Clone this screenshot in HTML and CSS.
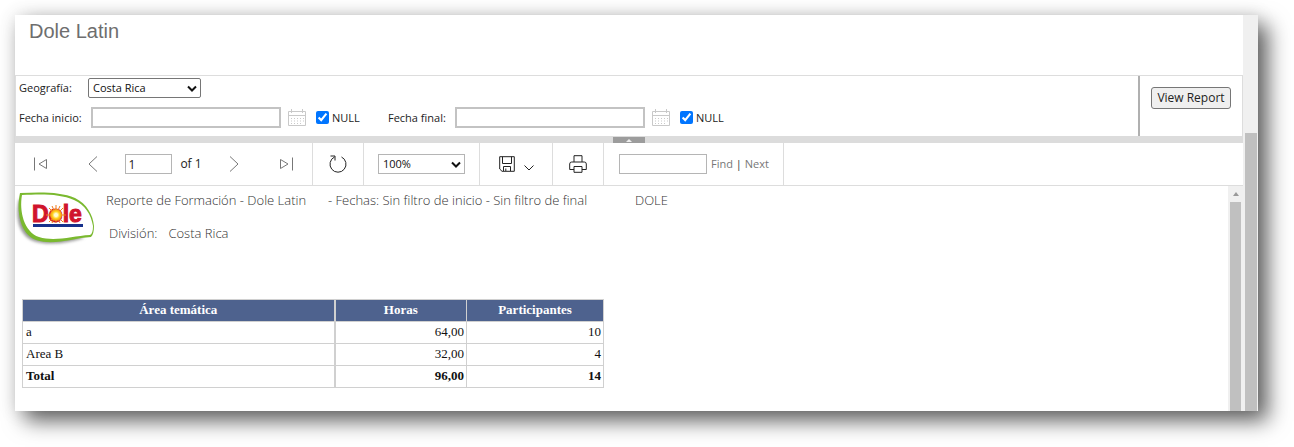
FILE: index.html
```html
<!DOCTYPE html>
<html lang="es">
<head>
<meta charset="utf-8">
<title>Dole Latin</title>
<link rel="stylesheet" href="styles.css">
</head>
<body>
<div class="window">
  <main class="page">
    <header class="page-header"><h1 class="page-title">Dole Latin</h1></header>

    <form class="params">
      <div class="param-fields">
        <div class="param-row">
          <label class="label-first" for="geo">Geografía:</label>
          <div class="select-wrap geo">
            <select id="geo"><option>Costa Rica</option></select>
            <svg class="chevron" viewBox="0 0 10 7"><path d="M1 1.500 5 5.500l4-4"/></svg>
          </div>
        </div>
        <div class="param-row">
          <div class="param-group">
            <label class="label-start" for="start">Fecha inicio:</label>
            <input class="date" id="start" type="text">
            <svg class="calendar" viewBox="0 0 18 17"><path d="M.5 2.500h17v14H.5zM.5 6.500h17M3.500 0v4M14.500 0v4"/><path class="dots" d="M3 9.500h13M3 12h13M3 14.500h11"/></svg>
            <input class="check" id="null1" type="checkbox" checked>
            <label class="null" for="null1">NULL</label>
          </div>
          <div class="param-group">
            <label class="label-end" for="end">Fecha final:</label>
            <input class="date" id="end" type="text">
            <svg class="calendar" viewBox="0 0 18 17"><path d="M.5 2.500h17v14H.5zM.5 6.500h17M3.500 0v4M14.500 0v4"/><path class="dots" d="M3 9.500h13M3 12h13M3 14.500h11"/></svg>
            <input class="check" id="null2" type="checkbox" checked>
            <label class="null" for="null2">NULL</label>
          </div>
        </div>
      </div>
      <div class="param-submit"><button class="view-report" type="button">View Report</button></div>
    </form>

    <div class="splitter"><button class="collapse" type="button" aria-label="Collapse"><svg viewBox="0 0 6 3"><path d="M0 3 3 0l3 3z"/></svg></button></div>

    <div class="toolbar">
      <div class="tools paging">
        <button class="icon" type="button" aria-label="First page"><svg width="16" height="14" viewBox="0 0 16 14"><path d="M1.500.5v13M13.500 2.500v9L6 7z"/></svg></button>
        <div class="page-step">
          <button class="icon" type="button" aria-label="Previous page"><svg width="10" height="16" viewBox="0 0 10 16"><path d="M9 .5 1 8l8 7.500"/></svg></button>
          <div class="page-number">
            <input class="page-input" id="page" type="text" value="1">
            <label for="page">of 1</label>
          </div>
          <button class="icon" type="button" aria-label="Next page"><svg width="10" height="16" viewBox="0 0 10 16"><path d="M1 .5 9 8l-8 7.500"/></svg></button>
        </div>
        <button class="icon" type="button" aria-label="Last page"><svg width="16" height="14" viewBox="0 0 16 14"><path d="M14.500.5v13M2.500 2.500v9L10 7z"/></svg></button>
      </div>
      <div class="tools refresh">
        <button class="icon dark" type="button" aria-label="Refresh"><svg width="20" height="20" viewBox="0 0 20 20"><path d="M13.500 3A8 8 0 1 1 6.500 3M2.500 2H7v4.500"/></svg></button>
      </div>
      <div class="tools zoom">
        <div class="select-wrap zoom-select">
          <select aria-label="Zoom"><option>100%</option></select>
          <svg class="chevron" viewBox="0 0 10 7"><path d="M1 1.500 5 5.500l4-4"/></svg>
        </div>
      </div>
      <div class="tools save">
        <button class="icon dark" type="button" aria-label="Export"><svg width="16" height="16" viewBox="0 0 16 16"><path d="M.7.7h14.600v14.600H3L.7 13zM3.500.7v6.800h9V.7M4.500 15v-4.500h7V15M6.800 12.500V15"/></svg><svg class="caret" width="10" height="6" viewBox="0 0 10 6"><path d="m.5.5 4.500 4.500L9.500.5"/></svg></button>
      </div>
      <div class="tools print">
        <button class="icon dark" type="button" aria-label="Print"><svg width="18" height="18" viewBox="0 0 18 18"><path d="M5 7V.7h8V7M5 14.500H.7V9q0-2 2-2h12.600q2 0 2 2v5.500H13M5 11.500h8v5.800H5z"/></svg></button>
      </div>
      <div class="tools find">
        <input class="find-input" type="text" aria-label="Find text">
        <span class="find-links"><a>Find</a> <b>|</b> <a>Next</a></span>
      </div>
    </div>

    <div class="report">
      <div class="report-body">
        <div class="report-head">
          <svg class="logo" viewBox="0 0 80 56" role="img" aria-label="Dole">
            <defs>
              <filter id="soft" x="-20%" y="-20%" width="140%" height="140%"><feGaussianBlur stdDeviation="1.500"/></filter>
              <radialGradient id="sun"><stop offset=".25" stop-color="#fffbd0"/><stop offset=".6" stop-color="#ffd21e"/><stop offset="1" stop-color="#f28a12"/></radialGradient>
            </defs>
            <path class="logo-shadow" filter="url(#soft)" d="M4 8C0 25 3 42 16 49c14 6 35 4 53-2z"/>
            <path class="leaf" d="M5 2C28 1 46 1 60 7c12 6 18 17 19 28 0 5-1 9-3 11-18 1-37 9-55 3C5 43 1 20 5 2z"/>
            <path class="leaf-white" d="M7 4c22-1 38-1 52 5 11 5 17 14 19 26 0 5-1 8-3 9-18 1-35 7-51 2C9 41 4 20 7 4z"/>
            <text class="logo-text" x="17" y="31">Dole</text>
            <path class="rays" d="M41 14v18M31 24h20M34 17l14 14M48 17 34 31M37 15l8 17M45 15l-8 17"/>
            <circle cx="41" cy="24" r="6" fill="url(#sun)"/>
            <path class="bar" d="M18 33h50v3H18z"/>
          </svg>
          <div class="report-info">
            <p class="info-line"><span class="info-title">Reporte de Formación - Dole Latin</span><span class="info-dates">- Fechas: Sin filtro de inicio - Sin filtro de final</span><span>DOLE</span></p>
            <p class="info-line division"><span>División:</span><span>Costa Rica</span></p>
          </div>
        </div>
        <table class="data">
          <thead><tr><th class="col-area">Área temática</th><th class="col-hours">Horas</th><th class="col-people">Participantes</th></tr></thead>
          <tbody>
            <tr><td>a</td><td>64,00</td><td>10</td></tr>
            <tr><td>Area B</td><td>32,00</td><td>4</td></tr>
          </tbody>
          <tfoot><tr><td>Total</td><td>96,00</td><td>14</td></tr></tfoot>
        </table>
      </div>
      <div class="scrollbar inner"><svg class="scroll-up" viewBox="0 0 6 4"><path d="M0 4 3 0l3 4z"/></svg><div class="thumb"></div></div>
    </div>
  </main>
  <div class="scrollbar outer"><div class="thumb"></div></div>
</div>
</body>
</html>
```

FILE: styles.css
```css
* { box-sizing: border-box; }

body {
  margin: 0;
  min-height: 100vh;
  padding: 15px 36px 36px 15px;
  display: flex;
  background: #fff;
  color: #222;
  font: 12px/16px "Open Sans", "Noto Sans", sans-serif;
}

input, select, button { font: inherit; color: inherit; margin: 0; }
svg { display: block; flex: none; }

.window {
  flex: 1;
  display: flex;
  background: #fff;
  box-shadow: 10px 10px 20px rgba(0, 0, 0, .6), 0 0 18px rgba(0, 0, 0, .12);
}
.page { flex: 1; min-width: 0; display: flex; flex-direction: column; }

.page-header { height: 60px; padding: 4px 14px; }
.page-title {
  margin: 0;
  color: #6e6e6e;
  font: 20px/24px "Liberation Sans", Arial, sans-serif;
}

/* Parameters */
.params { display: flex; border: 1px solid #ddd; border-bottom: 0; }
.param-fields {
  flex: 1;
  padding: 2px 3px 8px;
  display: flex;
  flex-direction: column;
  gap: 9px;
}
.param-row { display: flex; align-items: center; gap: 27px; font-size: 11px; }
.param-row:first-child { gap: 0; }
.param-group { display: flex; align-items: center; }
.label-first { width: 69px; }
.label-start { width: 72px; }
.label-end { width: 67px; }
.select-wrap { display: grid; align-items: center; }
.select-wrap > * { grid-area: 1 / 1; }
.select-wrap select {
  appearance: none;
  width: 100%;
  height: 20px;
  padding: 0 4px;
  border: 1px solid #767676;
  border-radius: 2px;
  background: #fff;
  color: #111;
}
.geo { width: 113px; }
.chevron {
  width: 10px;
  height: 7px;
  margin-right: 4px;
  justify-self: end;
  fill: none;
  stroke: #111;
  stroke-width: 2;
  pointer-events: none;
}
.date {
  width: 190px;
  height: 21px;
  border: 2px solid #c3c3c3;
  background: #fff;
}
.calendar {
  width: 18px;
  height: 17px;
  margin: 0 10px 0 7px;
  fill: none;
  stroke: #c9c9c9;
}
.dots { stroke-dasharray: 1 2; }
.check { width: 13px; height: 13px; accent-color: #0075ff; }
.null { margin-left: 3px; width: 29px; }
.param-submit {
  width: 104px;
  padding: 11px;
  border-left: 2px solid #b0b0b0;
}
.view-report {
  width: 80px;
  height: 22px;
  padding: 0;
  border: 1px solid #767676;
  border-radius: 3px;
  background: #efefef;
}

.splitter { height: 7px; background: #dcdcdc; display: flex; justify-content: center; align-items: flex-end; }
.collapse {
  width: 32px;
  height: 6px;
  padding: 0;
  border: 0;
  background: #9c9c9c;
  display: flex;
  justify-content: center;
  align-items: center;
}
.collapse svg { width: 6px; height: 3px; fill: #eee; }

/* Viewer toolbar */
.toolbar { display: flex; height: 43px; border-bottom: 1px solid #ddd; }
.tools { display: flex; align-items: center; justify-content: center; border-right: 1px solid #ddd; }
.icon {
  display: flex;
  align-items: center;
  padding: 0;
  border: 0;
  background: none;
}
.icon svg { fill: none; stroke: #777; stroke-width: 1; }
.dark svg { stroke: #222; }
.paging { width: 298px; padding: 0 18px; justify-content: space-between; }
.page-step { display: flex; align-items: center; gap: 27px; }
.page-number { display: flex; align-items: center; gap: 8px; }
.page-input, .find-input { height: 20px; border: 1px solid #b5b5b5; background: #fff; }
.page-input { width: 47px; padding: 0 2px; }
.refresh { width: 51px; }
.zoom { width: 116px; }
.zoom-select { width: 87px; font-size: 11px; }
.zoom-select select { border-color: #b5b5b5; border-radius: 0; }
.save { width: 73px; }
.save .icon { gap: 9px; }
.save .caret { margin-top: 7px; }
.print { width: 51px; }
.find { width: 180px; padding-left: 15px; gap: 4px; justify-content: flex-start; }
.find-input { width: 88px; }
.find-links { color: #777; white-space: nowrap; font-size: 11px; }
.find-links b { color: #333; font-weight: 400; }

/* Report */
.report { flex: 1; display: flex; }
.report-body { flex: 1; padding: 5px 0 22px; }
.report-head { display: flex; gap: 11px; }
.logo { width: 80px; height: 56px; }
.logo-shadow { fill: #999; }
.leaf { fill: #7ab92f; }
.leaf-white { fill: #fff; }
.logo-text { font: 700 23px "Liberation Sans", Arial, sans-serif; fill: #d0142c; stroke: #d0142c; }
.rays { stroke: #f07a1a; stroke-width: 1; }
.bar { fill: #16318c; }
.report-info { color: #333; font-size: 13px; font-weight: 300; line-height: 18px; }
.info-line { display: flex; margin: 0; }
.info-title { width: 222px; }
.info-dates { width: 307px; }
.division { margin: 15px 0 0 3px; gap: 11px; }

.data {
  width: 582px;
  margin: 52px 0 0 7px;
  border-collapse: collapse;
  table-layout: fixed;
  color: #111;
  font: 13px/17px "Liberation Serif", "Times New Roman", serif;
}
.data th, .data td { height: 22px; padding: 0 2px 2px; border: 1px solid #d0d0d0; text-align: right; }
.data td:first-child { padding-left: 3px; text-align: left; }
.data th { background: #4e628e; color: #fff; font-weight: 700; text-align: center; }
.data tfoot { font-weight: 700; }
.data th:first-child, .data td:first-child { border-right-width: 2px; }
.col-area { width: 312px; }
.col-hours { width: 132px; }

.scrollbar { width: 15px; background: #f0f0f0; display: flex; flex-direction: column; }
.thumb { flex: 1; background: #c0c0c0; }
.outer { padding: 118px 1px 0 2px; }
.inner { padding: 6px 2px 0; gap: 6px; }
.scroll-up { width: 6px; height: 4px; align-self: center; fill: #999; }
```
